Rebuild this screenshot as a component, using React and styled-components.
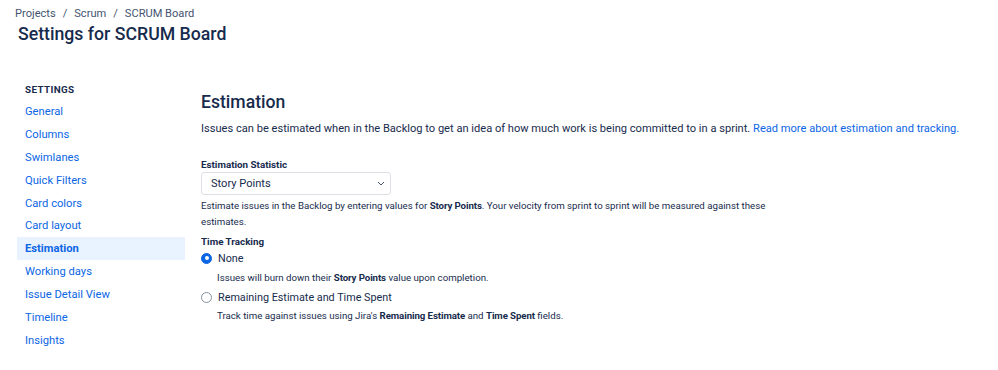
import React from "react";
import styled, { createGlobalStyle } from "styled-components";

const GlobalStyle = createGlobalStyle`
  body {
    margin: 0;
    background: #ffffff;
    font-family: Roboto, "Liberation Sans", sans-serif;
    color: #172b4d;
  }
`;

const Page = styled.div`
  padding: 6px 0 0 0;
`;

const Header = styled.div`
  padding: 0 0 0 15px;
`;

const Breadcrumbs = styled.div`
  display: flex;
  gap: 7px;
  font-size: 11.1px;
  line-height: 16px;
  color: #44546f;
`;

const Title = styled.h1`
  margin: 0 0 0 3px;
  font-size: 17.7px;
  line-height: 24px;
  font-weight: 500;
  color: #172b4d;
`;

const Body = styled.div`
  display: flex;
  padding: 34px 0 0 17px;
`;

const Sidebar = styled.nav`
  width: 168px;
  flex-shrink: 0;
`;

const SidebarHeading = styled.div`
  padding: 0 8px;
  font-size: 9.8px;
  line-height: 20px;
  font-weight: 700;
  letter-spacing: 0.4px;
  text-transform: uppercase;
  color: #172b4d;
`;

const NavItem = styled.div`
  padding: 0 8px;
  height: 22.9px;
  display: flex;
  align-items: center;
  font-size: 11.2px;
  font-weight: ${(p) => (p.$active ? 700 : 400)};
  color: #0c66e4;
  background: ${(p) => (p.$active ? "#e9f2ff" : "transparent")};
`;

const Main = styled.main`
  padding: 0 0 0 16px;
`;

const Heading = styled.h2`
  margin: 10px 0 0 0;
  font-size: 17.6px;
  line-height: 24px;
  font-weight: 500;
`;

const Intro = styled.p`
  margin: 6px 0 0 0;
  font-size: 11.1px;
  line-height: 18px;
`;

const Link = styled.a`
  color: #0c66e4;
  text-decoration: none;
`;

const FieldLabel = styled.div`
  margin-top: ${(p) => p.$top || 0}px;
  font-size: 9.8px;
  line-height: 14px;
  font-weight: 700;
`;

const Select = styled.div`
  width: 190px;
  height: 23px;
  box-sizing: border-box;
  border: 1px solid #dcdfe4;
  border-radius: 3px;
  display: flex;
  align-items: center;
  justify-content: space-between;
  padding: 0 5px 0 9px;
  font-size: 11.1px;
`;

const Help = styled.p`
  margin: ${(p) => p.$top || 0}px 0 0 ${(p) => p.$indent || 0}px;
  width: ${(p) => (p.$wide ? "590px" : "auto")};
  font-size: 9.7px;
  line-height: 16px;
  color: #172b4d;
`;

const Strong = styled.b`
  font-weight: 700;
  letter-spacing: -0.1px;
`;

const RadioRow = styled.label`
  display: flex;
  align-items: center;
  gap: 6px;
  margin-top: ${(p) => p.$top || 0}px;
  height: 18px;
  font-size: 10.8px;
`;

const RadioDot = styled.span`
  width: 11px;
  height: 11px;
  border-radius: 50%;
  box-sizing: border-box;
  display: flex;
  align-items: center;
  justify-content: center;
  border: 1px solid ${(p) => (p.$on ? "#0c66e4" : "#8590a2")};
  background: ${(p) => (p.$on ? "#0c66e4" : "#fff")};

  &::after {
    content: "";
    width: 4px;
    height: 4px;
    border-radius: 50%;
    background: ${(p) => (p.$on ? "#fff" : "transparent")};
  }
`;

const navItems = [
  "General",
  "Columns",
  "Swimlanes",
  "Quick Filters",
  "Card colors",
  "Card layout",
  "Estimation",
  "Working days",
  "Issue Detail View",
  "Timeline",
  "Insights",
];

export default function App() {
  return (
    <Page>
      <GlobalStyle />
      <Header>
        <Breadcrumbs>
          <span>Projects</span>
          <span>/</span>
          <span>Scrum</span>
          <span>/</span>
          <span>SCRUM Board</span>
        </Breadcrumbs>
        <Title>Settings for SCRUM Board</Title>
      </Header>
      <Body>
        <Sidebar>
          <SidebarHeading>Settings</SidebarHeading>
          {navItems.map((n) => (
            <NavItem key={n} $active={n === "Estimation"}>
              {n}
            </NavItem>
          ))}
        </Sidebar>
        <Main>
          <Heading>Estimation</Heading>
          <Intro>
            Issues can be estimated when in the Backlog to get an idea of how
            much work is being committed to in a sprint.{" "}
            <Link>Read more about estimation and tracking.</Link>
          </Intro>
          <FieldLabel $top={20}>Estimation Statistic</FieldLabel>
          <Select>
            <span>Story Points</span>
            <svg width="8" height="5" viewBox="0 0 8 5">
              <path d="M1 1l3 3 3-3" fill="none" stroke="#44546f" strokeWidth="1" />
            </svg>
          </Select>
          <Help $top={3} $wide>
            Estimate issues in the Backlog by entering values for{" "}
            <Strong>Story Points</Strong>. Your velocity from sprint to sprint
            will be measured against these estimates.
          </Help>
          <FieldLabel $top={5}>Time Tracking</FieldLabel>
          <RadioRow $top={0}>
            <RadioDot $on />
            None
          </RadioRow>
          <Help $top={3} $indent={16}>
            Issues will burn down their <Strong>Story Points</Strong> value
            upon completion.
          </Help>
          <RadioRow $top={2}>
            <RadioDot />
            Remaining Estimate and Time Spent
          </RadioRow>
          <Help $top={2} $indent={16}>
            Track time against issues using Jira's{" "}
            <Strong>Remaining Estimate</Strong> and <Strong>Time Spent</Strong>{" "}
            fields.
          </Help>
        </Main>
      </Body>
    </Page>
  );
}
